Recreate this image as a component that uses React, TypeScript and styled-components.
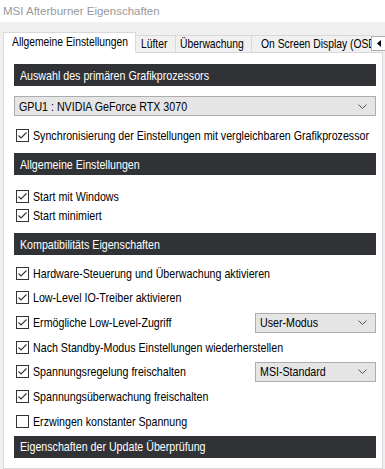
import React from "react";
import styled, { createGlobalStyle, css } from "styled-components";

const GlobalStyle = createGlobalStyle`
  html, body {
    margin: 0;
    padding: 0;
    background: #f0f0f0;
  }
  body {
    font-family: "Liberation Sans", Arial, sans-serif;
    font-size: 13px;
    color: #000;
    overflow: hidden;
  }
`;

// the dialog font is a narrow sans; Liberation Sans squeezed to Arial Narrow proportions
const condensed = css`
  display: inline-block;
  white-space: nowrap;
  transform: scaleX(0.82);
  transform-origin: 0 50%;
`;

const compat = [
  { label: "Hardware-Steuerung und Überwachung aktivieren", checked: true },
  { label: "Low-Level IO-Treiber aktivieren", checked: true },
  { label: "Ermögliche Low-Level-Zugriff", checked: true, select: "User-Modus" },
  { label: "Nach Standby-Modus Einstellungen wiederherstellen", checked: true },
  { label: "Spannungsregelung freischalten", checked: true, select: "MSI-Standard" },
  { label: "Spannungsüberwachung freischalten", checked: true },
  { label: "Erzwingen konstanter Spannung", checked: false },
];

const Chevron = () => (
  <svg width="9" height="5" viewBox="0 0 9 5">
    <polyline points="0.5,0.5 4.5,4.5 8.5,0.5" fill="none" stroke="#555" strokeWidth="1" />
  </svg>
);

const Check = ({ checked }: { checked: boolean }) => (
  <CheckBox>
    {checked && (
      <svg width="11" height="11" viewBox="0 0 11 11">
        <polyline points="1.5,5.5 4,8 9.5,2.5" fill="none" stroke="#333" strokeWidth="1.1" />
      </svg>
    )}
  </CheckBox>
);

export default function App() {
  return (
    <Window>
      <GlobalStyle />
      <TitleBar>MSI Afterburner Eigenschaften</TitleBar>
      <Body>
        <TabStrip>
          <Tabs>
            <Tab $active $width={133} $pad={8}>
              <TabLabel>Allgemeine Einstellungen</TabLabel>
            </Tab>
            <Tab $width={40} $pad={5}>
              <TabLabel>Lüfter</TabLabel>
            </Tab>
            <Tab $width={76} $pad={4}>
              <TabLabel>Überwachung</TabLabel>
            </Tab>
            <Tab $width={140} $pad={9}>
              <TabLabel>On Screen Display (OSD)</TabLabel>
            </Tab>
          </Tabs>
          <Scroller>
            <ScrollButton>
              <svg width="4" height="7" viewBox="0 0 4 7">
                <polygon points="4,0 0,3.5 4,7" fill="#000" />
              </svg>
            </ScrollButton>
            <ScrollButton>
              <svg width="4" height="7" viewBox="0 0 4 7">
                <polygon points="0,0 4,3.5 0,7" fill="#000" />
              </svg>
            </ScrollButton>
          </Scroller>
        </TabStrip>

        <Panel>
          <SectionHeader>
            <HeaderText>Auswahl des primären Grafikprozessors</HeaderText>
          </SectionHeader>
          <Select $mt={10}>
            <SelectText>GPU1 : NVIDIA GeForce RTX 3070</SelectText>
            <Chevron />
          </Select>
          <CheckRow $h={20} $mt={9}>
            <Check checked />
            <Label>Synchronisierung der Einstellungen mit vergleichbaren Grafikprozessor</Label>
          </CheckRow>

          <SectionHeader $mt={8}>
            <HeaderText>Allgemeine Einstellungen</HeaderText>
          </SectionHeader>
          <CheckRow $h={19} $mt={12}>
            <Check checked />
            <Label>Start mit Windows</Label>
          </CheckRow>
          <CheckRow $h={19}>
            <Check checked />
            <Label>Start minimiert</Label>
          </CheckRow>

          <SectionHeader $mt={8}>
            <HeaderText>Kompatibilitäts Eigenschaften</HeaderText>
          </SectionHeader>
          <CheckList>
            {compat.map((row) => (
              <CheckRow key={row.label} $h={24.67}>
                <Check checked={row.checked} />
                <Label>{row.label}</Label>
                {row.select && (
                  <Select $width={121}>
                    <SelectText>{row.select}</SelectText>
                    <Chevron />
                  </Select>
                )}
              </CheckRow>
            ))}
          </CheckList>

          <SectionHeader $mt={2}>
            <HeaderText>Eigenschaften der Update Überprüfung</HeaderText>
          </SectionHeader>
        </Panel>
      </Body>
    </Window>
  );
}

const Window = styled.div`
  width: 385px;
  height: 469px;
  display: flex;
  flex-direction: column;
  overflow: hidden;
  background: #f0f0f0;
`;

const TitleBar = styled.div`
  height: 22px;
  flex-shrink: 0;
  display: flex;
  align-items: center;
  padding-left: 3px;
  background: #fff;
  color: #999;
  font-size: 11.5px;
`;

const Body = styled.div`
  flex: 1;
  min-height: 0;
  display: flex;
  flex-direction: column;
  padding: 0 2px 0 3px;
`;

const TabStrip = styled.div`
  height: 31px;
  flex-shrink: 0;
  display: flex;
  align-items: flex-end;
  margin-bottom: -1px;
  position: relative;
  z-index: 1;
`;

const Tabs = styled.div`
  flex: 1;
  min-width: 0;
  height: 100%;
  display: flex;
  align-items: flex-end;
  overflow: hidden;
`;

const Tab = styled.div<{ $active?: boolean; $width: number; $pad: number }>`
  box-sizing: border-box;
  flex-shrink: 0;
  width: ${(p) => p.$width}px;
  overflow: hidden;
  display: flex;
  align-items: center;
  height: ${(p) => (p.$active ? "21px" : "17px")};
  margin-bottom: ${(p) => (p.$active ? "0" : "1px")};
  padding: 0 0 ${(p) => (p.$active ? "1px" : "0")} ${(p) => p.$pad}px;
  background: ${(p) => (p.$active ? "#fff" : "#f0f0f0")};
  border: 1px solid #d9d9d9;
  border-left: ${(p) => (p.$active ? "1px solid #d9d9d9" : "none")};
  border-bottom: ${(p) => (p.$active ? "1px solid #fff" : "none")};
`;

const TabLabel = styled.span`
  ${condensed};
  font-size: 12.6px;
`;

const Scroller = styled.div`
  flex-shrink: 0;
  display: flex;
  margin-right: -18px;
  margin-bottom: 2px;
`;

const ScrollButton = styled.div`
  box-sizing: border-box;
  width: 15px;
  height: 15px;
  display: flex;
  align-items: center;
  justify-content: center;
  background: #fdfdfd;
  border: 1px solid #adadad;
  & + & {
    border-left: none;
  }
`;

const Panel = styled.div`
  flex: 1;
  display: flex;
  flex-direction: column;
  background: #fff;
  border: 1px solid #d9d9d9;
  padding: 11px 6px 0 10px;
`;

const SectionHeader = styled.div<{ $mt?: number }>`
  flex-shrink: 0;
  height: 22px;
  margin-top: ${(p) => p.$mt ?? 0}px;
  display: flex;
  align-items: center;
  padding-left: 6px;
  background: #313236;
  color: #fff;
`;

const HeaderText = styled.span`
  ${condensed};
  font-size: 13px;
`;

const Select = styled.div<{ $mt?: number; $width?: number }>`
  box-sizing: border-box;
  flex-shrink: 0;
  height: 20px;
  width: ${(p) => (p.$width ? `${p.$width}px` : "auto")};
  margin-top: ${(p) => p.$mt ?? 0}px;
  margin-left: ${(p) => (p.$width ? "auto" : "0")};
  display: flex;
  align-items: center;
  justify-content: space-between;
  padding: 0 8px 0 4px;
  background: #e5e5e5;
  border: 1px solid #adadad;
`;

const SelectText = styled.span`
  ${condensed};
  font-size: 13px;
`;

const CheckList = styled.div`
  display: flex;
  flex-direction: column;
  margin-top: 6px;
`;

const CheckRow = styled.div<{ $h: number; $mt?: number }>`
  flex-shrink: 0;
  height: ${(p) => p.$h}px;
  margin-top: ${(p) => p.$mt ?? 0}px;
  display: flex;
  align-items: center;
  padding-left: 2px;
`;

const CheckBox = styled.span`
  box-sizing: border-box;
  width: 13px;
  height: 13px;
  flex-shrink: 0;
  display: flex;
  align-items: center;
  justify-content: center;
  background: #fff;
  border: 1px solid #333;
`;

const Label = styled.span`
  ${condensed};
  margin-left: 4px;
  font-size: 13px;
`;
